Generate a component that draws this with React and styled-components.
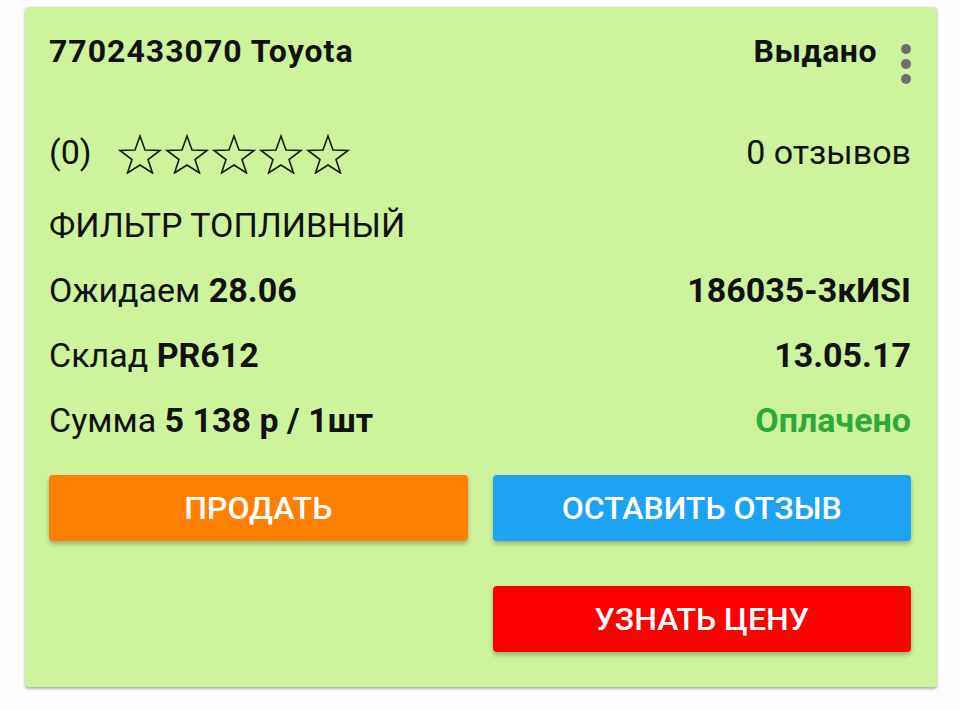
import React from "react"
import styled, { createGlobalStyle } from 'styled-components'

const GlobalStyle = createGlobalStyle`
	html, body {
		margin: 0;
		padding: 0;
		background: #fdfdfd;
		font-family: Roboto, "Liberation Sans", sans-serif;
		color: #111;
	}
`

const Page = styled.div`
	width: 960px;
	height: 710px;
	padding: 7px 23px 0 25px;
	box-sizing: border-box;
	overflow: hidden;
`

const Card = styled.div`
	background: #cdf39d;
	border-radius: 4px;
	padding: 24px 26px 35px 24px;
	box-shadow: 0 2px 3px rgba(0, 0, 0, 0.3), 0 0 2px rgba(0, 0, 0, 0.08);
	display: flex;
	flex-direction: column;
`

const Header = styled.div`
	display: flex;
	justify-content: space-between;
	align-items: flex-start;
	height: 56px;
`

const Title = styled.div`
	font-size: 32px;
	font-weight: 700;
	letter-spacing: 1px;
	line-height: 40px;
`

const Status = styled.div`
	display: flex;
	align-items: flex-start;
	gap: 24px;
	font-size: 32px;
	font-weight: 700;
	letter-spacing: 0.5px;
	line-height: 40px;
`

const Kebab = styled.div`
	display: flex;
	flex-direction: column;
	gap: 5px;
	margin-top: 13px;
	& span {
		width: 10px;
		height: 10px;
		border-radius: 50%;
		background: #6e6e6e;
	}
`

const Row = styled.div`
	display: flex;
	justify-content: space-between;
	align-items: center;
	height: 65px;
	font-size: 34px;
	margin-top: ${p => p.$top || 0}px;
	margin-bottom: ${p => p.$bottom || 0}px;
`

const Left = styled.div`
	display: flex;
	align-items: center;
	& b { font-weight: 700; }
`

const Right = styled.div`
	font-weight: ${p => p.$bold ? 700 : 400};
	color: ${p => p.$color || '#111'};
`

const Stars = styled.div`
	display: flex;
	margin-left: 26px;
	margin-top: 4px;
	gap: 3px;
`

const Buttons = styled.div`
	display: grid;
	grid-template-columns: 1fr 1fr;
	column-gap: 25px;
	row-gap: 45px;
	margin-top: 23px;
`

const Button = styled.button`
	grid-column: ${p => p.$col || 'auto'};
	height: 66px;
	border: none;
	border-radius: 4px;
	background: ${p => p.$bg};
	color: #fff;
	font-family: Roboto, "Liberation Sans", sans-serif;
	font-size: 32px;
	font-weight: 500;
	box-shadow: 0 3px 4px rgba(0, 0, 0, 0.25);
`

const Star = () => (
	<svg width="44" height="40" viewBox="0 0 44 40">
		<path
			d="M22 2 L27 16 L42 16.5 L30 25.5 L34.5 39 L22 31 L9.5 39 L14 25.5 L2 16.5 L17 16 Z"
			fill="none"
			stroke="#1a1a1a"
			strokeWidth="1.6"
			strokeLinejoin="miter"
		/>
	</svg>
)

const App = () => (
	<>
		<GlobalStyle />
		<Page>
			<Card>
				<Header>
					<Title>7702433070 Toyota</Title>
					<Status>
						Выдано
						<Kebab><span /><span /><span /></Kebab>
					</Status>
				</Header>
				<Row $top={32} $bottom={8}>
					<Left>
						(0)
						<Stars>{[0, 1, 2, 3, 4].map(i => <Star key={i} />)}</Stars>
					</Left>
					<Right>0 отзывов</Right>
				</Row>
				<Row>
					<Left>ФИЛЬТР ТОПЛИВНЫЙ</Left>
				</Row>
				<Row>
					<Left>Ожидаем&nbsp;<b>28.06</b></Left>
					<Right $bold>186035-3кИSI</Right>
				</Row>
				<Row>
					<Left>Склад&nbsp;<b>PR612</b></Left>
					<Right $bold>13.05.17</Right>
				</Row>
				<Row>
					<Left>Сумма&nbsp;<b>5 138 р / 1шт</b></Left>
					<Right $bold $color="#2fa93a">Оплачено</Right>
				</Row>
				<Buttons>
					<Button $bg="#ff8000">ПРОДАТЬ</Button>
					<Button $bg="#1ea2f3">ОСТАВИТЬ ОТЗЫВ</Button>
					<Button $bg="#ff0000" $col="2">УЗНАТЬ ЦЕНУ</Button>
				</Buttons>
			</Card>
		</Page>
	</>
)

export default App
